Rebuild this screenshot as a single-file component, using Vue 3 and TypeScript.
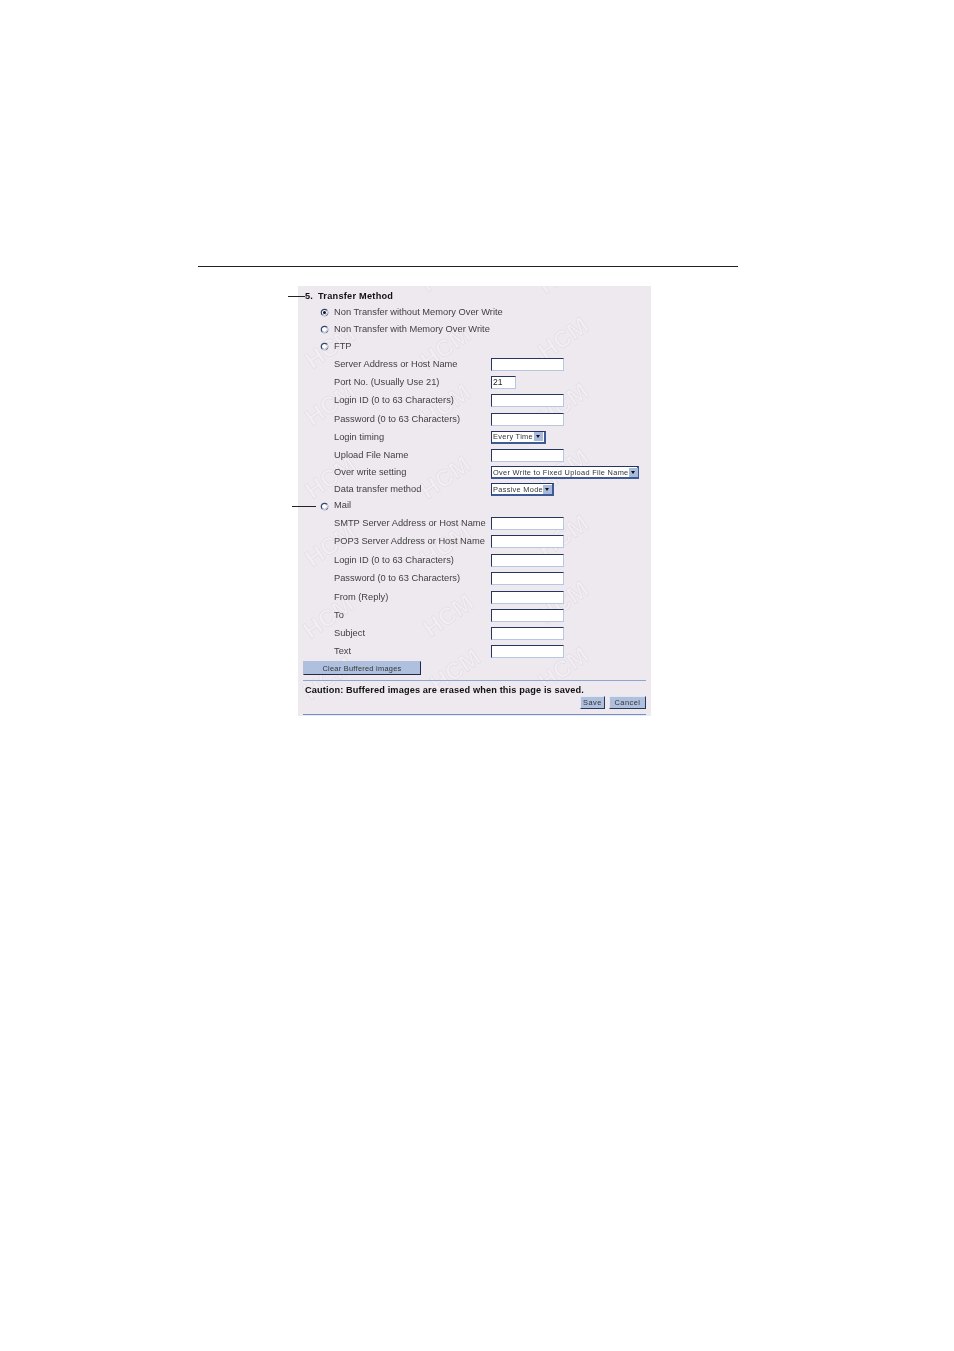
<script setup lang="ts">
type Row =
  | { kind: 'radio'; label: string; h: number; checked?: boolean }
  | { kind: 'input'; label: string; h: number; w: number; value?: string }
  | { kind: 'select'; label: string; h: number; w: number; value: string }

const rows: Row[] = [
  { kind: 'radio', label: 'Non Transfer without Memory Over Write', h: 17, checked: true },
  { kind: 'radio', label: 'Non Transfer with Memory Over Write', h: 17 },
  { kind: 'radio', label: 'FTP', h: 17 },
  { kind: 'input', label: 'Server Address or Host Name', h: 18, w: 73 },
  { kind: 'input', label: 'Port No. (Usually Use 21)', h: 18, w: 25, value: '21' },
  { kind: 'input', label: 'Login ID (0 to 63 Characters)', h: 19, w: 73 },
  { kind: 'input', label: 'Password (0 to 63 Characters)', h: 18, w: 73 },
  { kind: 'select', label: 'Login timing', h: 18, w: 55, value: 'Every Time' },
  { kind: 'input', label: 'Upload File Name', h: 18, w: 73 },
  { kind: 'select', label: 'Over write setting', h: 17, w: 148, value: 'Over Write to Fixed Upload File Name' },
  { kind: 'select', label: 'Data transfer method', h: 17, w: 63, value: 'Passive Mode' },
  { kind: 'radio', label: 'Mail', h: 16 },
  { kind: 'input', label: 'SMTP Server Address or Host Name', h: 18, w: 73 },
  { kind: 'input', label: 'POP3 Server Address or Host Name', h: 19, w: 73 },
  { kind: 'input', label: 'Login ID (0 to 63 Characters)', h: 18, w: 73 },
  { kind: 'input', label: 'Password (0 to 63 Characters)', h: 19, w: 73 },
  { kind: 'input', label: 'From (Reply)', h: 18, w: 73 },
  { kind: 'input', label: 'To', h: 18, w: 73 },
  { kind: 'input', label: 'Subject', h: 18, w: 73 },
  { kind: 'input', label: 'Text', h: 18, w: 73 },
]

// Watermark centres, relative to the panel
const marks: [number, number][] = [
  [147, -16], [265, -14],
  [32, 61], [147, 61], [265, 52],
  [32, 118], [147, 119], [265, 118],
  [32, 191], [147, 191], [265, 184],
  [32, 259], [147, 259], [265, 250],
  [30, 331], [150, 329], [265, 316],
  [30, 392], [157, 384], [265, 382],
]
</script>

<template>
  <main class="page">
    <hr class="rule" />
    <section class="panel">
      <svg class="wm" width="353" height="430" viewBox="0 0 353 430">
        <text
          v-for="(m, i) in marks"
          :key="i"
          :transform="`translate(${m[0]} ${m[1]}) rotate(-35)`"
          class="wm-text"
          text-anchor="middle"
          dy="8.5"
        >HCM</text>
      </svg>
      <span class="callout callout-a"></span>
      <span class="callout callout-b"></span>

      <h2 class="title"><span class="num">5.</span>Transfer Method</h2>

      <div class="rows">
        <div v-for="(r, i) in rows" :key="i" class="row" :style="{ height: r.h + 'px' }">
          <template v-if="r.kind === 'radio'">
            <svg class="radio" width="9" height="9" viewBox="0 0 9 9">
              <circle cx="4.5" cy="4.5" r="3.2" fill="#fff" stroke="#33416e" stroke-width="1.2" />
              <path d="M6.8 2.2a3.3 3.3 0 0 1-4.6 4.6" fill="none" stroke="#c3cfe4" stroke-width="1.3" />
              <circle v-if="r.checked" cx="4.5" cy="4.5" r="1.5" fill="#111" />
            </svg>
            <span class="label radio-label">{{ r.label }}</span>
          </template>
          <template v-else>
            <span class="label field-label">{{ r.label }}</span>
            <input v-if="r.kind === 'input'" class="box" :style="{ width: r.w + 'px' }" :value="r.value ?? ''" />
            <div v-else class="box select" :style="{ width: r.w + 'px' }">
              <span class="select-text">{{ r.value }}</span>
              <span class="arrow"></span>
            </div>
          </template>
        </div>
      </div>

      <button class="clear" type="button">Clear Buffered images</button>
      <div class="line line-top"></div>
      <p class="caution">Caution: Buffered images are erased when this page is saved.</p>
      <div class="actions">
        <button class="small save" type="button">Save</button>
        <button class="small cancel" type="button">Cancel</button>
      </div>
      <div class="line line-bottom"></div>
    </section>
  </main>
</template>

<style scoped>
.page {
  width: 954px;
  height: 1351px;
  box-sizing: border-box;
  background: #fff;
  padding: 266px 0 0 198px;
  font-family: "Liberation Sans", Arial, sans-serif;
  color: #333;
  overflow: hidden;
}
.rule {
  width: 540px;
  height: 1px;
  margin: 0;
  border: 0;
  background: #222;
}
.panel {
  position: relative;
  margin: 19px 0 0 100px;
  width: 353px;
  height: 430px;
  box-sizing: border-box;
  padding: 3px 5px 0;
  background: #eee8ef;
  filter: blur(0.25px);
}
.wm {
  position: absolute;
  left: 0;
  top: 0;
  pointer-events: none;
  overflow: hidden;
}
.wm-text {
  font: 700 24px "Liberation Sans", Arial, sans-serif;
  fill: #f1edf2;
  stroke: #e0dae2;
  stroke-width: 0.5;
}
.callout {
  position: absolute;
  height: 1px;
  background: #222;
}
.callout-a { left: -10px; top: 10px; width: 17px; }
.callout-b { left: -6px; top: 220px; width: 24px; }
.title {
  position: relative;
  margin: 0;
  height: 14px;
  font-size: 9.2px;
  line-height: 14px;
  font-weight: 700;
  color: #111;
  display: flex;
  letter-spacing: 0.25px;
}
.num { width: 13px; margin-left: 2px; }
.rows {
  position: relative;
  margin-top: 1px;
  padding-left: 17px;
}
.row {
  display: flex;
  align-items: center;
}
.radio {
  width: 9px;
  margin-right: 5px;
  flex: none;
}
.label {
  font-size: 9.3px;
  padding-bottom: 1px;
  color: #3f3f3f;
  white-space: nowrap;
}
.radio-label { padding-bottom: 2px; }
.field-label {
  margin-left: 14px;
  width: 157px;
  flex: none;
}
.box {
  box-sizing: border-box;
  height: 13px;
  padding: 0 0 0 1px;
  margin: 0;
  background: #fff;
  border: 1px solid #b7c7e2;
  border-top-color: #27345f;
  border-left-color: #27345f;
  border-radius: 0;
  font: 8.5px "Liberation Sans", Arial, sans-serif;
  color: #222;
  outline: 0;
}
.select {
  display: flex;
  align-items: center;
  justify-content: space-between;
  padding: 0 1px;
  border-right-color: #3e5a94;
  border-bottom-color: #3e5a94;
  border-right-width: 2px;
  border-bottom-width: 2px;
}
.select-text {
  font-size: 7.4px;
  letter-spacing: 0.3px;
  white-space: nowrap;
  color: #333;
}
.arrow {
  position: relative;
  flex: none;
  width: 9px;
  height: 9px;
  background: #a9bbdc;
}
.arrow::after {
  content: "";
  position: absolute;
  left: 2px;
  top: 3px;
  border: 2.5px solid transparent;
  border-top: 3px solid #111;
  border-bottom: 0;
}
.clear {
  position: relative;
  display: block;
  box-sizing: border-box;
  width: 118px;
  height: 14px;
  margin: 1px 0 0;
  padding: 0;
  background: #aec0de;
  border: 1px solid #aec0de;
  border-right-color: #20294a;
  border-bottom-color: #20294a;
  font: 7.4px "Liberation Sans", Arial, sans-serif;
  letter-spacing: 0.27px;
  color: #333;
}
.line {
  position: relative;
  height: 1px;
  background: #8ea6cf;
}
.line-top { margin-top: 5px; }
.caution {
  position: relative;
  margin: 4px 0 0 2px;
  font-size: 9.2px;
  line-height: 11px;
  font-weight: 700;
  color: #111;
  letter-spacing: 0.14px;
}
.actions {
  position: relative;
  display: flex;
  justify-content: flex-end;
  gap: 4px;
  height: 13px;
}
.small {
  box-sizing: border-box;
  height: 13px;
  padding: 0;
  background: #aec0de;
  border: 1px solid #e4e6f0;
  border-right-color: #2a3559;
  border-bottom-color: #2a3559;
  font: 7.4px "Liberation Sans", Arial, sans-serif;
  letter-spacing: 0.5px;
  color: #333;
}
.save { width: 25px; }
.cancel { width: 37px; }
.line-bottom { margin-top: 5px; background: #6f90c8; }
</style>
